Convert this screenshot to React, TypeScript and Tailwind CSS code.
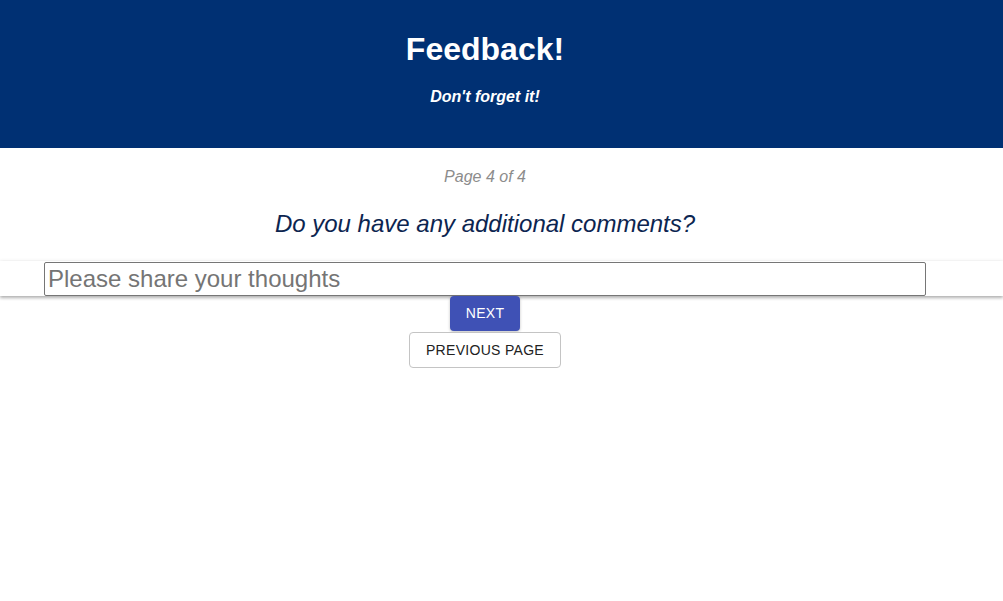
import React from "react";

export default function App() {
  return (
    <div
      className="min-h-[601px] bg-white"
      style={{ fontFamily: '"Liberation Sans", Arial, Helvetica, sans-serif' }}
    >
      <header className="h-[148px] bg-[#003073] pr-[33px] flex flex-col items-center text-white">
        <h1 className="mt-[29px] text-[32px] leading-[40px] font-bold">Feedback!</h1>
        <p className="mt-[18px] text-[16px] leading-[20px] font-bold italic">Don't forget it!</p>
      </header>
      <div className="pr-[33px] flex flex-col items-center">
        <p className="mt-[19px] text-[16px] leading-[20px] italic text-[#8c8c8c]">Page 4 of 4</p>
        <h2 className="mt-[22px] text-[24px] leading-[30px] italic text-[#0c2550]">
          Do you have any additional comments?
        </h2>
      </div>
      <div className="mt-[22px] bg-white shadow-[0_2px_3px_rgba(0,0,0,0.3),0_-1px_3px_rgba(0,0,0,0.05)]">
        <div className="pr-[33px]">
          <div className="mx-[44px] pt-px">
            <input
              type="text"
              placeholder="Please share your thoughts"
              className="block w-full h-[34px] border border-[#767676] rounded-[2px] px-[3px] text-[24px] text-black placeholder:text-[#757575] outline-none"
              style={{ fontFamily: '"Liberation Sans", Arial, Helvetica, sans-serif' }}
            />
          </div>
        </div>
      </div>
      <div className="pr-[33px] flex flex-col items-center">
        <button className="h-[35px] w-[70px] rounded-[4px] bg-[#3f51b5] text-white text-[14px] tracking-[0.3px] uppercase shadow-[0_1px_3px_rgba(0,0,0,0.25)]">
          Next
        </button>
        <button className="mt-px h-[36px] w-[152px] rounded-[4px] border border-[#c4c4c4] bg-white text-[#222] text-[14px] tracking-[0.3px] uppercase">
          Previous Page
        </button>
      </div>
    </div>
  );
}
